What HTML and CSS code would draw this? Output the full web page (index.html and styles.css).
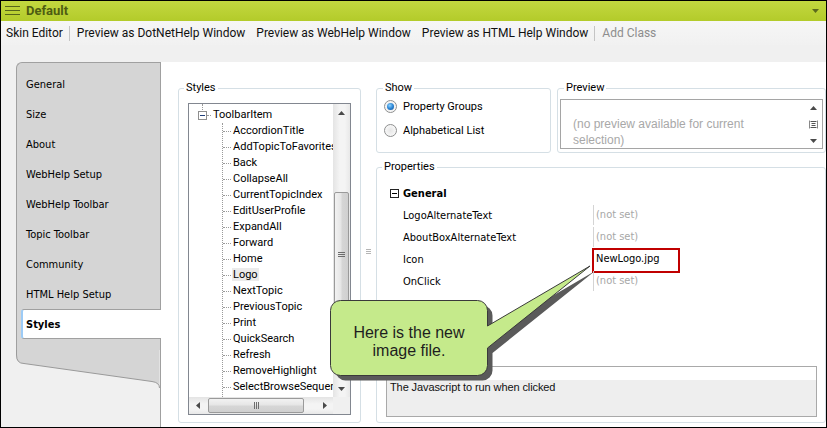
FILE: index.html
```html
<!DOCTYPE html>
<html>
<head>
<meta charset="utf-8">
<title>Default</title>
<link rel="stylesheet" href="styles.css">
</head>
<body>
<div class="window">
  <div class="titlebar">
    <svg class="menu-icon" width="15" height="10" viewBox="0 0 15 10"><path d="M0 0.5H15M0 4.5H15M0 8.5H15" stroke="#56651a" stroke-width="1"/></svg>
    <span class="title">Default</span>
    <svg class="title-dd" width="7" height="4" viewBox="0 0 7 4"><path d="M0 0H7L3.5 4Z" fill="#5b6a1d"/></svg>
  </div>
  <div class="toolbar">
    <span class="tb-item">Skin Editor</span>
    <span class="tb-sep"></span>
    <span class="tb-item">Preview as DotNetHelp Window</span>
    <span class="tb-item gap">Preview as WebHelp Window</span>
    <span class="tb-item gap">Preview as HTML Help Window</span>
    <span class="tb-sep"></span>
    <span class="tb-item disabled">Add Class</span>
  </div>
  <div class="main">
    <div class="sidebar">
      <div class="tabs">
        <div class="tab">General</div>
        <div class="tab">Size</div>
        <div class="tab">About</div>
        <div class="tab">WebHelp Setup</div>
        <div class="tab">WebHelp Toolbar</div>
        <div class="tab">Topic Toolbar</div>
        <div class="tab">Community</div>
        <div class="tab">HTML Help Setup</div>
        <div class="tab active">Styles</div>
      </div>
      <svg class="tabs-bottom" width="144" height="40" viewBox="0 0 144 40">
        <path d="M0 0V5Q0 13.5 8 13.5L136 31.5Q143.5 32.5 143.5 38V0Z" fill="#d5d5d5"/>
        <path d="M0.5 0V5Q0.5 13.5 8 13.5L136 31.5Q143.5 32.5 143.5 38" fill="none" stroke="#9a9a9a" stroke-width="1"/>
      </svg>
    </div>
    <div class="content">
      <fieldset class="group styles-group">
        <legend>Styles</legend>
        <div class="tree">
          <div class="tree-items">
            <div class="tree-root"><span class="expander"></span><span class="hline"></span><span>ToolbarItem</span></div>
            <div class="tree-children">
              <div class="node">AccordionTitle</div>
              <div class="node">AddTopicToFavorites</div>
              <div class="node">Back</div>
              <div class="node">CollapseAll</div>
              <div class="node">CurrentTopicIndex</div>
              <div class="node">EditUserProfile</div>
              <div class="node">ExpandAll</div>
              <div class="node">Forward</div>
              <div class="node">Home</div>
              <div class="node"><span class="sel">Logo</span></div>
              <div class="node">NextTopic</div>
              <div class="node">PreviousTopic</div>
              <div class="node">Print</div>
              <div class="node">QuickSearch</div>
              <div class="node">Refresh</div>
              <div class="node">RemoveHighlight</div>
              <div class="node">SelectBrowseSequence</div>
            </div>
          </div>
          <div class="vscroll">
            <div class="sb-btn"><svg width="7" height="4" viewBox="0 0 7 4"><path d="M0 4H7L3.5 0Z" fill="#4a4a4a"/></svg></div>
            <div class="vtrack">
              <div class="vthumb"><svg width="7" height="5" viewBox="0 0 7 5"><path d="M0 0.5H7M0 2.5H7M0 4.5H7" stroke="#6d6d6d"/></svg></div>
            </div>
            <div class="sb-btn"><svg width="7" height="4" viewBox="0 0 7 4"><path d="M0 0H7L3.5 4Z" fill="#4a4a4a"/></svg></div>
          </div>
          <div class="hscroll">
            <div class="sb-btn"><svg width="4" height="7" viewBox="0 0 4 7"><path d="M4 0V7L0 3.5Z" fill="#4a4a4a"/></svg></div>
            <div class="htrack">
              <div class="hthumb"><svg width="5" height="7" viewBox="0 0 5 7"><path d="M0.5 0V7M2.5 0V7M4.5 0V7" stroke="#6d6d6d"/></svg></div>
            </div>
            <div class="sb-btn"><svg width="4" height="7" viewBox="0 0 4 7"><path d="M0 0V7L4 3.5Z" fill="#4a4a4a"/></svg></div>
          </div>
          <div class="sb-corner"></div>
        </div>
      </fieldset>
      <div class="splitter"><svg width="5" height="5" viewBox="0 0 5 5"><path d="M0 0.5H5M0 2.5H5M0 4.5H5" stroke="#b5b5b5"/></svg></div>
      <div class="right">
        <div class="top-row">
          <fieldset class="group show-group">
            <legend>Show</legend>
            <label class="radio-row"><span class="radio checked"></span>Property Groups</label>
            <label class="radio-row second"><span class="radio"></span>Alphabetical List</label>
          </fieldset>
          <fieldset class="group preview-group">
            <legend>Preview</legend>
            <div class="preview-box">
              <div class="preview-text">(no preview available for current<br>selection)</div>
              <div class="preview-scroll">
                <svg width="7" height="4" viewBox="0 0 7 4"><path d="M0 4H7L3.5 0Z" fill="#4a4a4a"/></svg>
                <svg width="9" height="9" viewBox="0 0 9 9"><path d="M1.5 1.5H7.5M2.5 3.5H6.5M2.5 5.5H6.5M1.5 7.5H7.5" stroke="#555"/><path d="M0.5 0.5V8.5M8.5 0.5V8.5" stroke="#888"/></svg>
                <svg width="7" height="4" viewBox="0 0 7 4"><path d="M0 0H7L3.5 4Z" fill="#4a4a4a"/></svg>
              </div>
            </div>
          </fieldset>
        </div>
        <fieldset class="group props-group">
          <legend>Properties</legend>
          <div class="props-body">
            <div class="prop-cat"><span class="cat-box"></span>General</div>
            <div class="prop-row"><span class="prop-name">LogoAlternateText</span><span class="prop-value unset">(not set)</span></div>
            <div class="prop-row"><span class="prop-name">AboutBoxAlternateText</span><span class="prop-value unset">(not set)</span></div>
            <div class="prop-row"><span class="prop-name">Icon</span><span class="prop-value">NewLogo.jpg<span class="highlight-box"></span></span></div>
            <div class="prop-row"><span class="prop-name">OnClick</span><span class="prop-value unset">(not set)</span></div>
            <div class="desc">
              <div class="desc-top"></div>
              <div class="desc-text">The Javascript to run when clicked</div>
            </div>
          </div>
        </fieldset>
      </div>
    </div>
  </div>
  <div class="callout">
    <svg class="callout-shape" width="275" height="125" viewBox="0 0 275 125">
      <path transform="translate(5 5)" d="M15.5 40.5H152.5A10 10 0 0 1 162.5 50.5V66L265 6L162.5 88V105.5A10 10 0 0 1 152.5 115.5H15.5A10 10 0 0 1 5.5 105.5V50.5A10 10 0 0 1 15.5 40.5Z" fill="#5a5a5a"/>
      <path d="M15.5 40.5H152.5A10 10 0 0 1 162.5 50.5V66L265 6L162.5 88V105.5A10 10 0 0 1 152.5 115.5H15.5A10 10 0 0 1 5.5 105.5V50.5A10 10 0 0 1 15.5 40.5Z" fill="#c5ea8b" stroke="#3a3a3a" stroke-width="1"/>
    </svg>
    <div class="callout-text">Here is the new<br>image file.</div>
  </div>
</div>
</body>
</html>
```

FILE: styles.css
```css
* { box-sizing: border-box; }
html, body { margin: 0; padding: 0; }
body {
  width: 827px;
  height: 428px;
  overflow: hidden;
  background: #fff;
  font-family: Roboto, "Noto Sans", sans-serif;
  font-size: 12px;
  color: #000;
}
.window {
  width: 827px;
  height: 428px;
  border: 1px solid #000;
  background: #f0f0f0;
  display: flex;
  flex-direction: column;
  position: relative;
  overflow: hidden;
}

/* title bar */
.titlebar {
  height: 20px;
  flex: none;
  background: linear-gradient(#c3d840, #b3cb2a);
  display: flex;
  align-items: center;
  padding: 0 7px 0 4px;
}
.menu-icon { flex: none; margin-right: 6px; }
.title {
  flex: 1;
  font-family: Roboto, sans-serif;
  font-weight: bold;
  font-size: 13px;
  color: #4e5c12;
  line-height: 20px;
}
.title-dd { flex: none; }

/* toolbar */
.toolbar {
  height: 24px;
  flex: none;
  display: flex;
  align-items: center;
  padding-left: 5px;
  background: linear-gradient(#f6f6f6, #f1f1f1);
  font-size: 12px;
  white-space: nowrap;
}
.tb-item { color: #111; }
.tb-item.gap { margin-left: 11px; }
.tb-item.disabled { color: #8d8d8d; }
.tb-sep {
  width: 1px;
  height: 15px;
  background: #c4c4c4;
  margin: 0 7px 0 6px;
}

/* main */
.main {
  flex: 1;
  display: flex;
  padding-top: 17px;
  min-height: 0;
}
.sidebar {
  width: 160px;
  flex: none;
  padding-left: 15px;
  border-right: 1px solid #a0a0a0;
  display: flex;
  flex-direction: column;
}
.tabs {
  background: #d5d5d5;
  border-top: 1px solid #a0a0a0;
  border-left: 1px solid #a0a0a0;
  border-top-left-radius: 6px;
  padding: 6px 0 11px 0;
  font-family: "DejaVu Sans Condensed", "DejaVu Sans", sans-serif;
  font-stretch: condensed;
  font-size: 11px;
  color: #000;
}
.tab {
  height: 30px;
  display: flex;
  align-items: center;
  padding-left: 9px;
}
.tab.active {
  background: #fff;
  margin-left: 4px;
  margin-right: -1px;
  padding-left: 3px;
  border-top: 1px solid #a0a0a0;
  border-bottom: 1px solid #a0a0a0;
  border-left: 2px solid #9ccbf6;
  border-radius: 3px 0 0 3px;
  font-weight: bold;
  position: relative;
}
.tabs-bottom { display: block; flex: none; }

.content {
  flex: 1;
  background: #fff;
  display: flex;
  padding: 18px 0 4px 17px;
  min-width: 0;
}

/* group boxes */
.group {
  margin: 0;
  border: 1px solid #d5dfe5;
  border-radius: 3px;
  min-width: 0;
}
.group legend {
  padding: 0 2px;
  font-size: 11px;
  line-height: 16px;
  color: #000;
}

.styles-group {
  width: 183px;
  flex: none;
  padding: 7px 0 0 5px;
}
.tree {
  margin-left: 4px;
  width: 163px;
  height: 312px;
  border: 1px solid #828790;
  display: grid;
  grid-template-columns: 144px 17px;
  grid-template-rows: 293px 17px;
  font-size: 11px;
}
.tree-items {
  overflow: hidden;
  white-space: nowrap;
  padding-top: 3px;
  line-height: 16px;
}
.tree-root {
  height: 16px;
  display: flex;
  align-items: center;
  padding-left: 9px;
  position: relative;
}
.tree-root::before {
  content: "";
  position: absolute;
  left: 13px;
  top: -3px;
  height: 6px;
  border-left: 1px dotted #9a9a9a;
}
.expander {
  width: 9px;
  height: 9px;
  border: 1px solid #8f8f8f;
  background: #fff;
  position: relative;
  flex: none;
}
.expander::after {
  content: "";
  position: absolute;
  left: 1px;
  top: 3px;
  width: 5px;
  height: 1px;
  background: #1f3f7a;
}
.hline {
  width: 4px;
  border-top: 1px dotted #9a9a9a;
  margin-right: 2px;
}
.tree-children {
  margin-left: 33px;
  border-left: 1px dotted #9a9a9a;
  padding-bottom: 12px;
}
.node {
  height: 16px;
  padding-left: 10px;
  position: relative;
}
.node::before {
  content: "";
  position: absolute;
  left: 0;
  top: 8px;
  width: 8px;
  border-top: 1px dotted #9a9a9a;
}
.sel {
  background: #ebebeb;
  padding: 0 1px;
  margin-left: -1px;
}

/* scrollbars */
.vscroll {
  display: flex;
  flex-direction: column;
  background: linear-gradient(90deg, #e4e4e4, #f4f4f4 40%, #f4f4f4 70%, #e8e8e8);
}
.sb-btn {
  width: 17px;
  height: 17px;
  flex: none;
  display: flex;
  align-items: center;
  justify-content: center;
}
.vtrack { flex: 1; padding: 0 1px; }
.vthumb {
  margin-top: 71px;
  height: 124px;
  border: 1px solid #9a9a9a;
  border-radius: 2px;
  background: linear-gradient(90deg, #f2f2f2, #e6e6e6 45%, #d6d6d6 55%, #d0d0d0);
  display: flex;
  align-items: center;
  justify-content: center;
}
.hscroll {
  display: flex;
  background: linear-gradient(#e4e4e4, #f4f4f4 40%, #f4f4f4 70%, #e8e8e8);
}
.htrack { flex: 1; padding: 1px 0; }
.hthumb {
  margin-left: 2px;
  width: 96px;
  height: 15px;
  border: 1px solid #9a9a9a;
  border-radius: 2px;
  background: linear-gradient(#f2f2f2, #e6e6e6 45%, #d6d6d6 55%, #d0d0d0);
  display: flex;
  align-items: center;
  justify-content: center;
}
.sb-corner { background: #f0f0f0; }

.splitter {
  width: 15px;
  flex: none;
  display: flex;
  align-items: center;
  justify-content: center;
}

/* right column */
.right {
  flex: 1;
  min-width: 0;
  display: flex;
  flex-direction: column;
}
.top-row {
  display: flex;
  gap: 6px;
  height: 73px;
  flex: none;
}
.show-group {
  width: 175px;
  flex: none;
  padding: 2px 0 0 6px;
}
.radio-row {
  display: flex;
  align-items: center;
  height: 16px;
  font-size: 11px;
  padding-left: 1px;
}
.radio-row.second { margin-top: 8px; }
.radio {
  width: 13px;
  height: 13px;
  border-radius: 50%;
  border: 1px solid #8e8f8f;
  background: radial-gradient(circle at 50% 50%, #e6e6e6 0, #f7f7f7 70%);
  margin-right: 6px;
  position: relative;
  flex: none;
}
.radio.checked::after {
  content: "";
  position: absolute;
  left: 2px;
  top: 2px;
  width: 7px;
  height: 7px;
  border-radius: 50%;
  background: radial-gradient(circle at 40% 35%, #8fd3ff 0, #2b86d6 50%, #144f91 100%);
}
.preview-group {
  flex: 1;
  min-width: 0;
  padding: 3px 2px 0 2px;
}
.preview-group legend { margin-left: 4px; }
.preview-box {
  height: 50px;
  border: 1px solid #a5a5a5;
  display: flex;
}
.preview-text {
  flex: 1;
  padding: 16px 0 0 12px;
  font-family: "Liberation Sans", Arial, sans-serif;
  font-size: 12px;
  line-height: 16px;
  color: #a8a8a8;
  white-space: nowrap;
}
.preview-scroll {
  width: 17px;
  flex: none;
  display: flex;
  flex-direction: column;
  align-items: center;
  justify-content: space-between;
  padding: 6px 0 5px;
}

.props-group {
  margin-top: 6px;
  height: 264px;
  flex: none;
  padding: 0 8px 5px 5px;
}
.props-body {
  height: 242px;
  display: flex;
  flex-direction: column;
  padding-top: 7px;
  font-family: "DejaVu Sans Condensed", "DejaVu Sans", sans-serif;
  font-stretch: condensed;
  font-size: 11px;
}
.prop-cat {
  height: 22px;
  display: flex;
  align-items: center;
  padding-left: 8px;
  font-weight: bold;
}
.cat-box {
  width: 9px;
  height: 9px;
  border: 1px solid #222;
  margin-right: 4px;
  position: relative;
}
.cat-box::after {
  content: "";
  position: absolute;
  left: 1px;
  top: 3px;
  width: 5px;
  height: 1px;
  background: #000;
}
.prop-row {
  height: 22px;
  display: flex;
  align-items: center;
  padding-left: 21px;
}
.prop-name { width: 190px; flex: none; }
.prop-value {
  height: 20px;
  line-height: 20px;
  border-left: 1px solid #d4d4d4;
  padding-left: 2px;
  position: relative;
  flex: 1;
}
.prop-value.unset { color: #a7a7a7; }
.highlight-box {
  position: absolute;
  left: -2px;
  top: -1px;
  width: 88px;
  height: 25px;
  border: 2px solid #c00000;
}
.desc {
  margin-top: auto;
  margin-left: 4px;
  height: 51px;
  border: 1px solid #a9a9a9;
  display: flex;
  flex-direction: column;
}
.desc-top { height: 13px; background: #fff; flex: none; }
.desc-text {
  flex: 1;
  background: #eeeeee;
  padding: 0 0 0 3px;
  font-family: "Liberation Sans", Arial, sans-serif;
  font-stretch: normal;
  font-size: 11px;
  line-height: 14px;
  letter-spacing: -0.1px;
  color: #111;
}

/* callout overlay */
.callout {
  position: absolute;
  left: 324px;
  top: 259px;
  width: 275px;
  height: 125px;
}
.callout-shape { position: absolute; left: 0; top: 0; }
.callout-text {
  position: absolute;
  left: 5px;
  top: 64px;
  width: 158px;
  text-align: center;
  font-family: "Liberation Sans", Arial, sans-serif;
  font-size: 16px;
  line-height: 18px;
  color: #1e1e1e;
}
```
